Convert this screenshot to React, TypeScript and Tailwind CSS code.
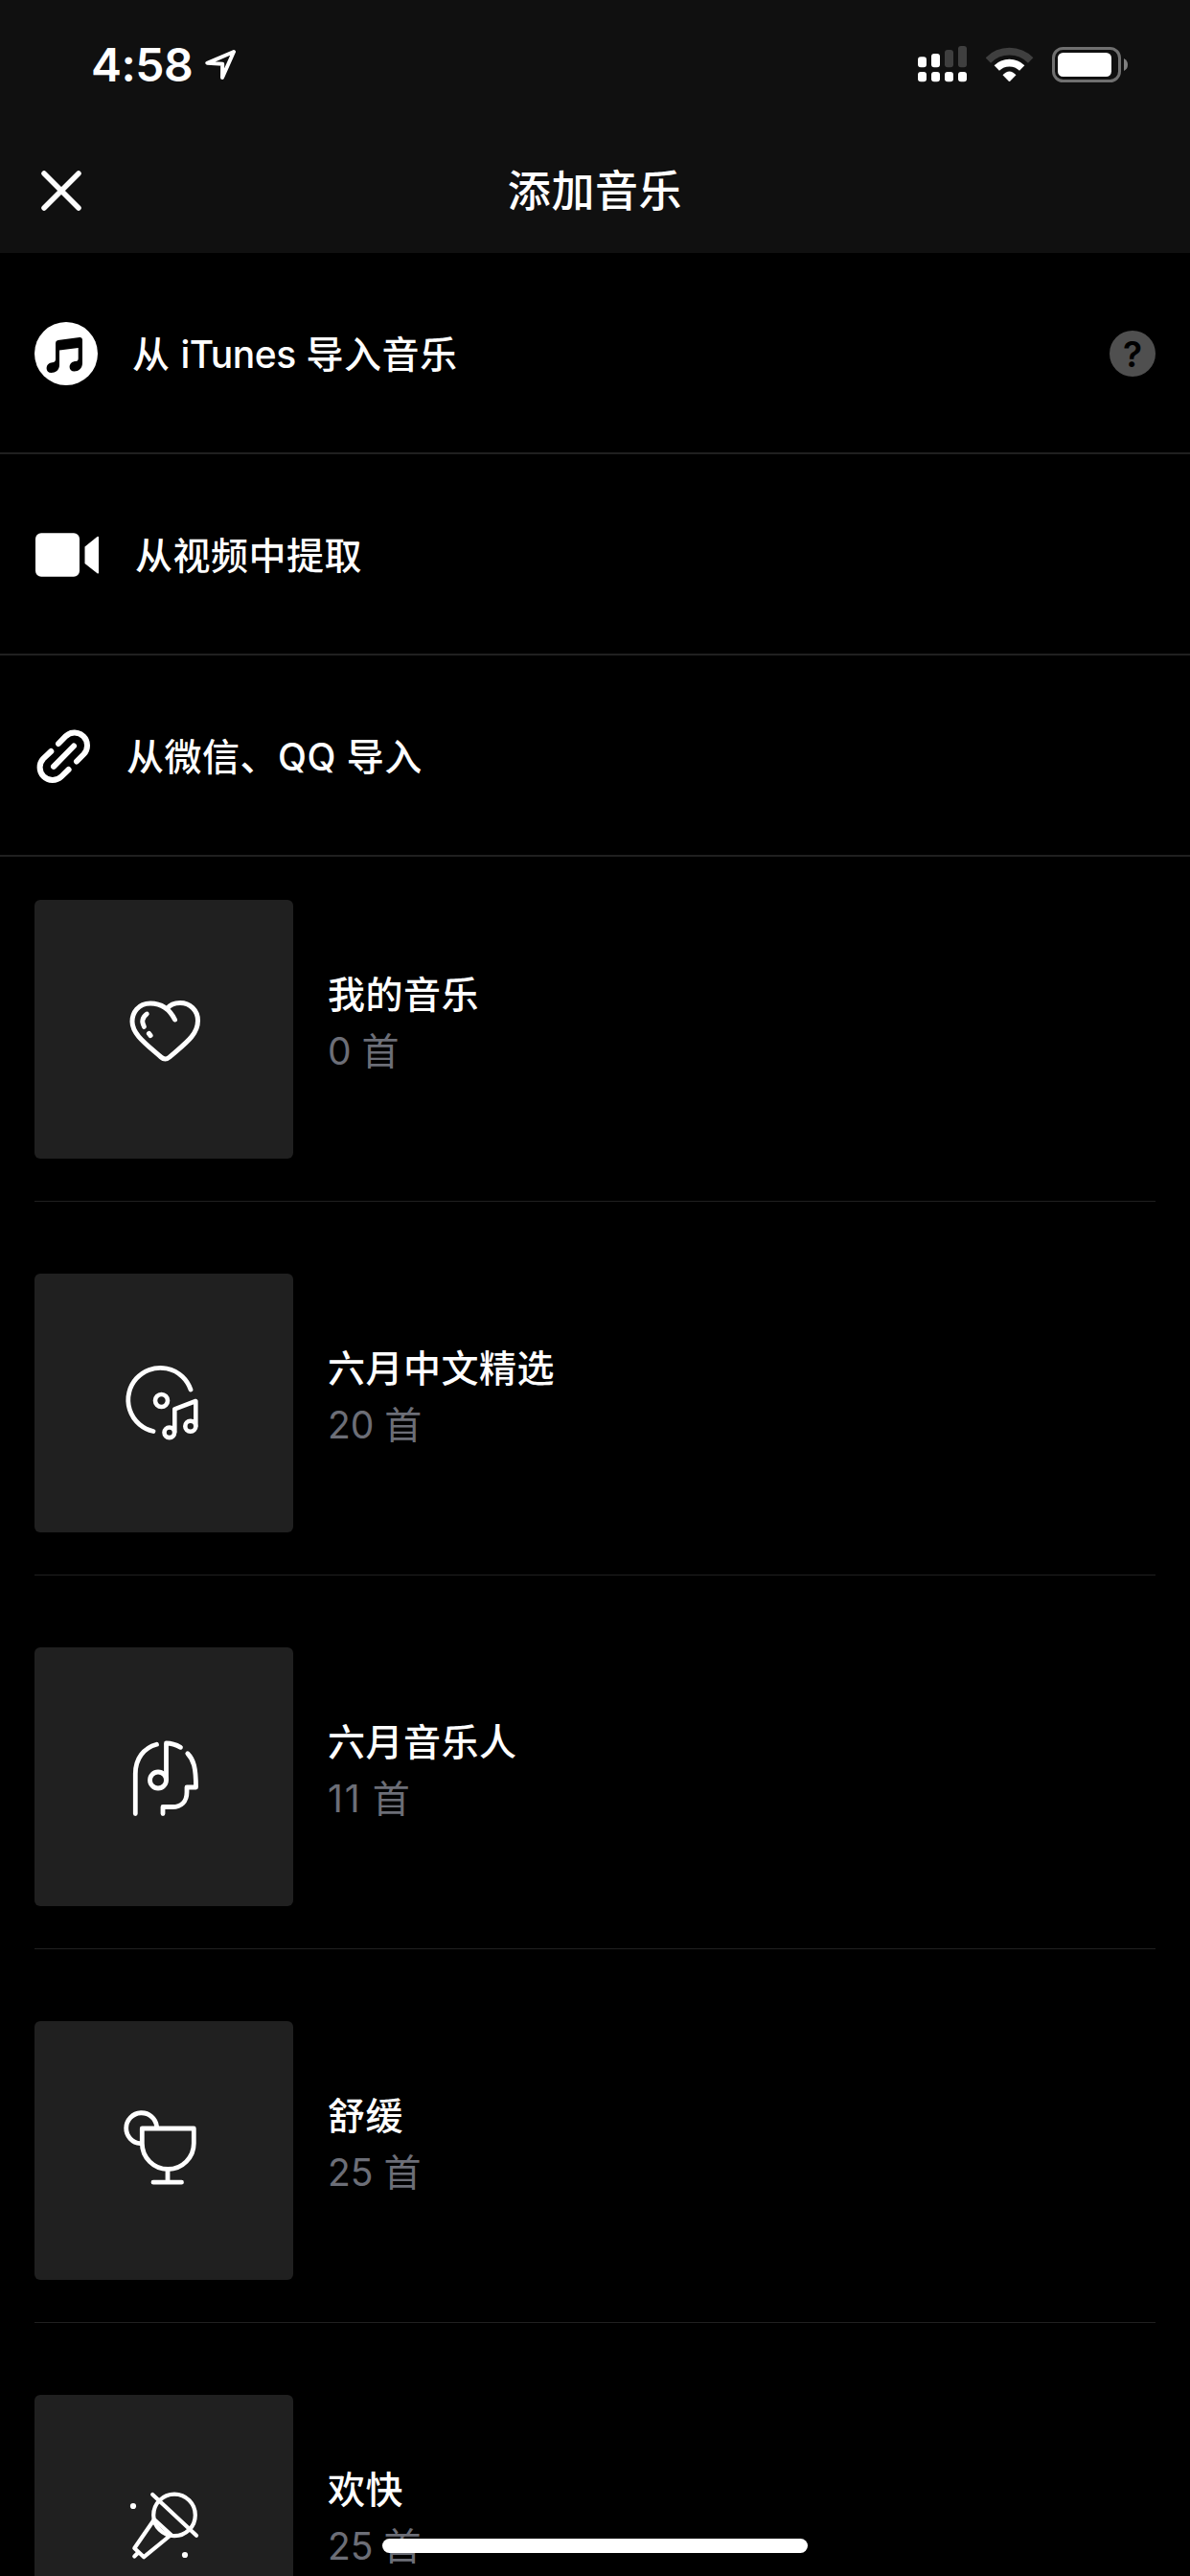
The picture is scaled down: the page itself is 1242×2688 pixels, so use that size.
import type { ReactNode } from "react";

const FONT = "font-['Inter','Noto_Sans_CJK_SC',sans-serif]";

function StatusBar() {
  return (
    <div className="flex h-[132px] items-center justify-between pl-[95px] pr-[64px] pt-[4px]">
      <div className="flex items-center gap-[15px]">
        <span className="h-[60px] w-[104px] whitespace-nowrap text-[48px] font-semibold leading-[60px] tracking-[-0.5px]">4:58</span>
        <svg width="34" height="34" viewBox="0 0 34 34" fill="none" stroke="#fff" strokeWidth="4" strokeLinejoin="round">
          <path d="M30 3 L2.300 14.800 L18.200 15.800 L18 30 Z" />
        </svg>
      </div>
      <div className="flex items-center pb-[2px]">
        <svg width="52" height="38" viewBox="0 0 52 38" fill="#fff">
          <rect x="0" y="11.300" width="9" height="11" rx="3" />
          <rect x="14" y="8" width="9" height="14.300" rx="3" />
          <rect x="28" y="4" width="9" height="18.300" rx="3" fill="#3f3f3f" />
          <rect x="42" y="0" width="9" height="22.300" rx="3" fill="#3f3f3f" />
          <rect x="0" y="27" width="9" height="10.300" rx="3" />
          <rect x="14" y="27" width="9" height="10.300" rx="3" />
          <rect x="28" y="27" width="9" height="10.300" rx="3" />
          <rect x="42" y="27" width="9" height="10.300" rx="3" />
        </svg>
        <svg className="ml-[19px]" width="50" height="38" viewBox="0 0 50 38">
          <path d="M2.300 15 A31 31 0 0 1 46.700 15" fill="none" stroke="#3f3f3f" strokeWidth="7.600" />
          <path d="M11.300 23 A18.800 18.800 0 0 1 37.700 23" fill="none" stroke="#fff" strokeWidth="7.600" />
          <path d="M17.500 30.300 Q24.500 22.500 31.500 30.300 L25.200 36.700 Q24.500 37.300 23.800 36.700 Z" fill="#fff" />
        </svg>
        <svg className="ml-[19px]" width="80" height="38" viewBox="0 0 80 38">
          <rect x="1.500" y="2.500" width="69" height="34" rx="10" fill="none" stroke="#707070" strokeWidth="3" />
          <rect x="6" y="7" width="56" height="25" rx="5.500" fill="#fff" />
          <path d="M75 13 Q79 15 79 19.500 Q79 24 75 26 Z" fill="#808080" />
        </svg>
      </div>
    </div>
  );
}

function Header() {
  return (
    <header className="h-[264px] bg-[#101010]">
      <StatusBar />
      <div className="grid h-[132px] grid-cols-[200px_1fr_200px] items-center">
        <svg className="ml-[43px] mt-[2px]" width="42" height="42" viewBox="0 0 42 42" stroke="#fff" strokeWidth="5.500" strokeLinecap="round">
          <path d="M3 3 L39 39 M39 3 L3 39" />
        </svg>
        <h1 className="pt-[3px] text-center text-[45px] font-medium leading-[60px] tracking-[0.6px]">添加音乐</h1>
      </div>
    </header>
  );
}

function Option({ icon, label, gap, help }: { icon: ReactNode; label: ReactNode; gap: string; help?: boolean }) {
  return (
    <div className="flex h-[210px] items-center border-b-2 border-[#202020] px-[36px] pt-[2px]">
      {icon}
      <span className={`${gap} pt-[2px] text-[39px] font-medium leading-[56px] tracking-[0.5px]`}>{label}</span>
      {help && (
        <span className="ml-auto flex size-[48px] items-center justify-center rounded-full bg-[#4f4f4f] text-[37px] font-semibold leading-none text-black">?</span>
      )}
    </div>
  );
}

const itunes = (
  <svg width="66" height="66" viewBox="0 0 66 66">
    <circle cx="33" cy="33" r="33" fill="#fff" />
    <path
      d="M22 22 Q22 19.300 24.500 18.900 L47 16 Q50 15.600 50 18.500 V43 C50 48 46 51.500 41.500 51.500 C38.500 51.500 36.600 49.500 36.600 47 C36.600 43 40 41 43 41 Q45.700 40.800 45.700 38 V27 L26 29.400 V45 C26 50 22 53 17.500 53 C14.500 53 12.600 51 12.600 48.500 C12.600 44.500 15.500 42.500 18.500 42.300 Q22 42 22 39 Z"
      fill="#000"
    />
  </svg>
);

const video = (
  <svg width="68" height="46" viewBox="0 0 68 46" fill="#fff">
    <rect x="1" y="0.300" width="46" height="45.500" rx="6" />
    <path d="M52.500 14.500 L65.500 4 Q67 3.300 67 5 V41.500 Q67 43 65.500 42.300 L52.500 32 Z" />
  </svg>
);

const link = (
  <svg width="60" height="60" viewBox="0 0 60 60" fill="none" stroke="#fff" strokeWidth="6" strokeLinecap="round">
    <path d="M25 17 L32.600 9.200 A13.300 13.300 0 0 1 51.400 28 L44 35.500" />
    <path d="M17.300 25 L9.200 32.600 A13.300 13.300 0 0 0 28 51.400 L35.600 44" />
    <path d="M20 40.800 L41 19.500" />
  </svg>
);

const heart = (
  <>
    <path strokeWidth="5" d="M72.500 44 C68 35 60 27 47 27 C34 27 28 37 28 46 C28 59 42 69 58 83 Q62.500 87 67 83 C83 69 96.500 60 96.500 45 C96.500 34 88 26.500 78 26.500 C71 26.500 67 29 64.500 32.500" />
    <path strokeWidth="4.800" d="M43.300 38 C38.500 41.500 37.500 46 40.500 51.500" />
    <path strokeWidth="5.200" d="M45.500 58.500 L47 60.500" />
  </>
);

const disc = (
  <>
    <path strokeWidth="4.800" d="M89 50 A33.500 33.500 0 1 0 50 93.500" />
    <circle strokeWidth="4.600" cx="58.500" cy="61.500" r="6.500" />
    <path strokeWidth="4.600" d="M72.300 94 V70.300 L94.300 62 V88" />
    <circle strokeWidth="4.600" cx="66.800" cy="94.800" r="5.300" />
    <circle strokeWidth="4.600" cx="88.800" cy="88.200" r="5.500" />
  </>
);

const head = (
  <>
    <path strokeWidth="4.800" d="M31.300 102.500 V61 C31.300 45 40 34 53.500 30.300" />
    <circle strokeWidth="4.800" cx="55" cy="67.500" r="8.500" />
    <path strokeWidth="4.800" d="M63.500 67 V29 Q71 29 78.500 33.300" />
    <path strokeWidth="4.800" d="M85.800 39.700 C92 46 94.500 54 94.500 75 H85 V80 C85 90 79 95.500 70 95.500 H60 V102.500" />
  </>
);

const glass = (
  <>
    <path strokeWidth="4.800" d="M36.500 56.700 A16 16 0 1 1 53.600 39" />
    <path strokeWidth="4.800" d="M38.300 41 H92.300 V56.500 A27 27 0 0 1 38.300 56.500 Z M65 84 V97 M50 97.200 H79.500" />
  </>
);

const mic = (
  <>
    <circle strokeWidth="4.200" cx="72" cy="44.400" r="21.800" />
    <path strokeWidth="4.200" d="M49.200 23 L95 65.700 M51 49 L68.500 65 L40.200 88.200 L30.300 79 L51 49 M34.500 83.300 L30.300 87.500" />
    <circle cx="29" cy="35" r="3.100" fill="#fff" stroke="none" />
    <circle cx="83" cy="86" r="3.100" fill="#fff" stroke="none" />
  </>
);

function TileIcon({ x, y, children }: { x: number; y: number; children: ReactNode }) {
  return (
    <svg className="size-[270px]" viewBox={`${-x} ${-y} 270 270`} fill="none" stroke="#fff" strokeLinecap="round" strokeLinejoin="round">
      {children}
    </svg>
  );
}

type PlaylistProps = { icon: ReactNode; title: string; count: number; first?: boolean };

function Playlist({ icon, title, count, first }: PlaylistProps) {
  return (
    <div className={`${first ? "pt-[45px]" : "pt-[75px]"} px-[36px]`}>
      <div className="flex h-[315px] items-start border-b border-[#202020]">
        <div className="size-[270px] shrink-0 rounded-[6px] bg-[#202020]">{icon}</div>
        <div className="ml-[36px] pt-[71px]">
          <div className="text-[39px] font-medium leading-[56px] tracking-[0.5px]">{title}</div>
          <div className="mt-[3px] text-[39px] leading-[56px] text-[#6c6e77]">
            <span className={count === 11 ? "tracking-[2px]" : "tracking-normal"}>{count}</span> 首
          </div>
        </div>
      </div>
    </div>
  );
}

export default function App() {
  return (
    <div className={`relative h-[2688px] w-[1242px] overflow-hidden bg-black text-white ${FONT}`}>
      <Header />
      <Option
        icon={itunes}
        label={<>从 <span className="tracking-[-0.5px]">iTunes</span> 导入音乐</>}
        gap="ml-[36px]"
        help
      />
      <Option icon={video} label="从视频中提取" gap="ml-[37px]" />
      <Option icon={link} label="从微信、QQ 导入" gap="ml-[36px]" />
      <Playlist first title="我的音乐" count={0} icon={<TileIcon x={74} y={81}>{heart}</TileIcon>} />
      <Playlist title="六月中文精选" count={20} icon={<TileIcon x={74} y={71}>{disc}</TileIcon>} />
      <Playlist title="六月音乐人" count={11} icon={<TileIcon x={74} y={71}>{head}</TileIcon>} />
      <Playlist title="舒缓" count={25} icon={<TileIcon x={74} y={71}>{glass}</TileIcon>} />
      <Playlist title="欢快" count={25} icon={<TileIcon x={74} y={81}>{mic}</TileIcon>} />
      <div className="absolute bottom-[24px] left-[399px] h-[15px] w-[444px] rounded-full bg-white" />
    </div>
  );
}
